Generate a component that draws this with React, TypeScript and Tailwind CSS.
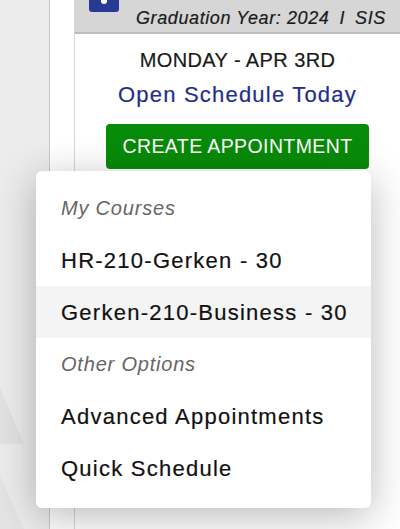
import React from 'react';

const courses = ['HR-210-Gerken - 30', 'Gerken-210-Business - 30'];
const options = ['Advanced Appointments', 'Quick Schedule'];

export default function App() {
    return (
        <div
            className="relative w-[400px] h-[529px] overflow-hidden flex bg-[#ededed]"
            style={{ fontFamily: '"Liberation Sans", Arial, sans-serif' }}
        >
            {/* 왼쪽 배경 */}
            <div className="relative w-[50px] shrink-0 bg-[#ececec] border-r border-[#c9c9c9]">
                <svg className="absolute left-0 top-[380px]" width="50" height="149" viewBox="0 0 50 149">
                    <polygon points="0,8 24,64 0,64" fill="#e2e2e2" />
                    <polygon points="0,96 24,149 0,149" fill="#e4e4e4" />
                </svg>
            </div>
            <div className="w-[25px] shrink-0 bg-white border-r border-[#d6d6d6]" />

            {/* 메인 카드 */}
            <main className="flex-1 bg-white flex flex-col min-w-0">
                <header className="h-[34px] bg-[#d6d6d6] border-b-2 border-[#bdbdbd] flex items-start pl-[14px] gap-[17px] overflow-hidden">
                    <div className="w-[30px] h-[12px] bg-[#263a94] rounded-b-[3px] shrink-0 flex justify-center">
                        <div className="w-[6px] h-[4px] bg-white rounded-b-full" />
                    </div>
                    <p className="pt-[8px] text-[18px] leading-[20px] italic text-[#1a1a1a] whitespace-nowrap tracking-[0.6px] [-webkit-text-stroke:0.2px_#1a1a1a]">
                        Graduation Year: 2024<span className="mx-[10px]">I</span>SIS
                    </p>
                </header>

                <div className="flex flex-col items-center">
                    <p className="mt-[14px] text-[20px] leading-[24px] text-[#1a1a1a] tracking-[0.4px] [-webkit-text-stroke:0.2px_#1a1a1a]">MONDAY - APR 3RD</p>
                    <p className="mt-[10px] text-[22px] leading-[26px] text-[#1f2e8c] tracking-[1.2px] [-webkit-text-stroke:0.2px_#1f2e8c]">Open Schedule Today</p>
                    <button className="mt-[16px] h-[45px] w-[263px] rounded-[4px] bg-[#088b08] text-white text-[19.5px] tracking-[0.4px]">
                        CREATE APPOINTMENT
                    </button>
                </div>
            </main>

            {/* 드롭다운 메뉴 */}
            <div className="absolute left-[36px] top-[171px] w-[335px] h-[337px] bg-white rounded-[6px] shadow-[0_8px_40px_rgba(0,0,0,0.28)] pt-[11px]">
                <div className="h-[52px] flex items-center pl-[25px] text-[20px] italic text-[#666] tracking-[0.8px]">My Courses</div>
                {courses.map((c, i) => (
                    <div
                        key={c}
                        className={`h-[52px] flex items-center pl-[25px] whitespace-nowrap text-[22px] text-[#111] tracking-[1.25px] [-webkit-text-stroke:0.2px_#111] ${i === 1 ? 'bg-[#f4f4f4]' : ''}`}
                    >
                        {c}
                    </div>
                ))}
                <div className="h-[52px] flex items-center pl-[25px] text-[20px] italic text-[#666] tracking-[0.8px]">Other Options</div>
                {options.map((o) => (
                    <div key={o} className="h-[52px] flex items-center pl-[25px] whitespace-nowrap text-[22px] text-[#111] tracking-[1.25px] [-webkit-text-stroke:0.2px_#111]">
                        {o}
                    </div>
                ))}
            </div>
        </div>
    );
}
